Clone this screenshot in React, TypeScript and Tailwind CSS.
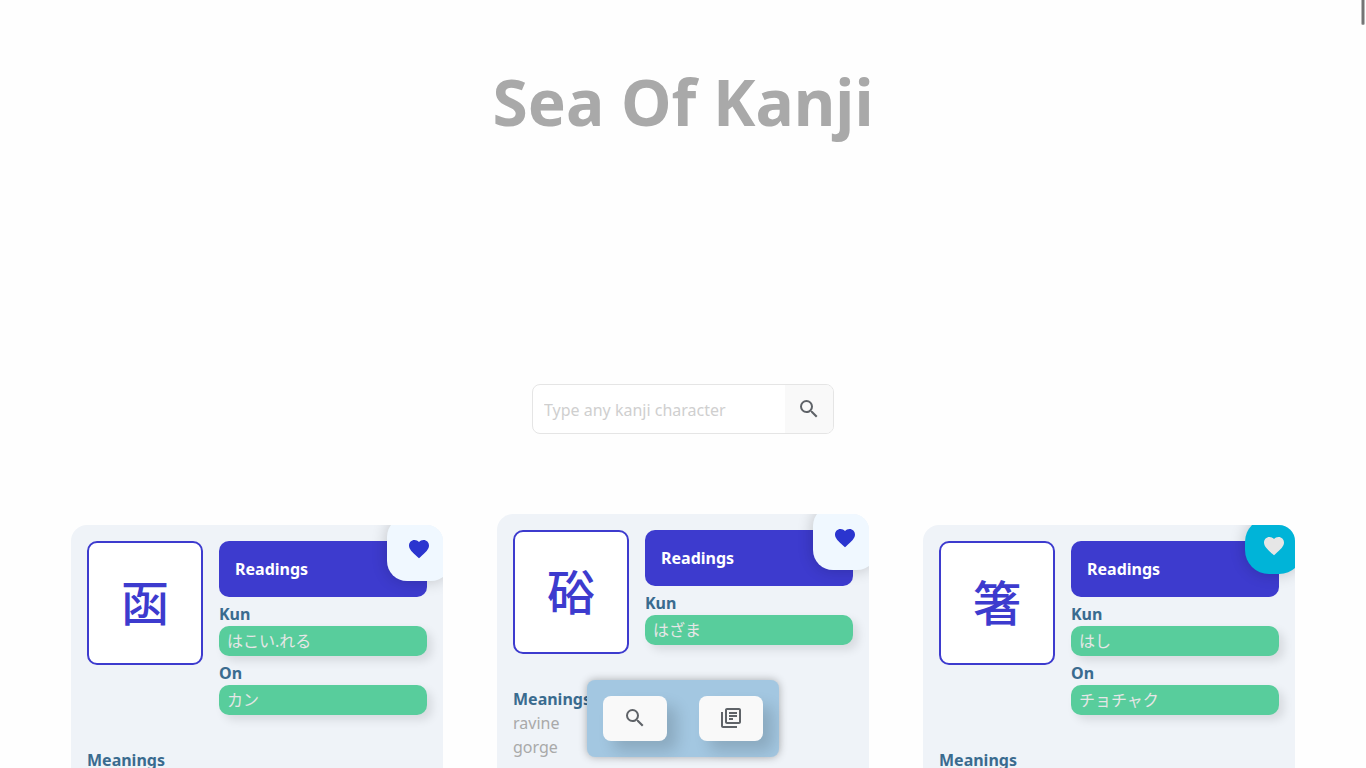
import { MdFavorite, MdOutlineLibraryBooks, MdSearch } from "react-icons/md";

type Kanji = {
  character: string;
  kun: string;
  on?: string;
  meanings: string[];
  liked: boolean;
  cardHeight: string;
};

const kanjiList: Kanji[] = [
  { character: "函", kun: "はこい.れる", on: "カン", meanings: [], liked: false, cardHeight: "min-h-[400px]" },
  { character: "硲", kun: "はざま", meanings: ["ravine", "gorge"], liked: false, cardHeight: "min-h-[422px]" },
  { character: "箸", kun: "はし", on: "チョチャク", meanings: [], liked: true, cardHeight: "min-h-[400px]" },
];

function Reading({ label, value }: { label: string; value: string }) {
  return (
    <div className="mt-[5px]">
      <h3 className="font-bold text-[#3a6b8f]">{label}</h3>
      <p className="h-[30px] rounded-[10px] bg-[#58cd9c] px-2 leading-[30px] text-[#e6e6e6] shadow-[5px_5px_10px_rgba(0,0,0,0.1)]">
        {value}
      </p>
    </div>
  );
}

function FavoriteButton({ character, liked }: { character: string; liked: boolean }) {
  const look = liked
    ? "-top-[7px] h-14 w-[58px] rounded-[24px] bg-[#00b4d8] text-[#e6e6e6]"
    : "-top-2 h-16 w-16 rounded-[20px] bg-[#f0f8ff] text-[#2b35cf]";
  return (
    <button
      type="button"
      aria-label={`Favorite ${character}`}
      aria-pressed={liked}
      className={`absolute -right-2 flex items-center justify-center shadow-[0_0_16px_rgba(0,0,0,0.2)] ${look}`}
    >
      <MdFavorite size={24} />
    </button>
  );
}

function KanjiCard({ kanji }: { kanji: Kanji }) {
  return (
    <article className={`relative overflow-hidden rounded-[16px] bg-[#eff3f8] p-4 ${kanji.cardHeight}`}>
      <div className="flex items-start gap-4">
        <div className="flex h-[124px] w-[116px] shrink-0 items-center justify-center rounded-[10px] border-2 border-[#3d3bce] bg-white text-5xl font-medium text-[#3d3bce]">
          {kanji.character}
        </div>
        <div className="min-w-0 flex-1">
          <h2 className="flex h-14 items-center rounded-[10px] bg-[#3d3bce] px-4 font-bold text-white">Readings</h2>
          <Reading label="Kun" value={kanji.kun} />
          {kanji.on && <Reading label="On" value={kanji.on} />}
        </div>
      </div>
      <h3 className="mt-[33px] font-bold text-[#3a6b8f]">Meanings</h3>
      <ul className="text-[#a9a9a9]">
        {kanji.meanings.map((meaning) => (
          <li key={meaning}>{meaning}</li>
        ))}
      </ul>
      <FavoriteButton character={kanji.character} liked={kanji.liked} />
    </article>
  );
}

export default function App() {
  return (
    <div className="h-screen overflow-hidden bg-[#fefefe] font-['Noto_Sans','Noto_Sans_CJK_JP',sans-serif] text-base">
      <header className="flex h-[204px] items-center justify-center">
        <h1 className="text-[64px] leading-[88px] font-bold text-[#a9a9a9]">Sea Of Kanji</h1>
      </header>

      <main>
        <form className="mx-auto mt-[180px] flex h-[50px] w-[302px] overflow-hidden rounded-[8px] border border-[#e5e5e5] bg-white">
          <input
            type="text"
            aria-label="Kanji character"
            placeholder="Type any kanji character"
            className="min-w-0 flex-1 px-[11px] pt-0.5 outline-none placeholder:text-[#cfcfcf]"
          />
          <button
            type="button"
            aria-label="Search"
            className="flex w-12 items-center justify-center bg-[#f9f9f9] text-[#5f6368]"
          >
            <MdSearch size={24} />
          </button>
        </form>

        <section className="mt-20 grid grid-cols-3 items-center gap-[54px] px-[71px]">
          {kanjiList.map((kanji) => (
            <KanjiCard key={kanji.character} kanji={kanji} />
          ))}
        </section>
      </main>

      <nav className="fixed bottom-[11px] left-1/2 flex -translate-x-1/2 gap-8 rounded-[8px] bg-[#a3c7e1] p-4 text-[#5f6368] shadow-[0_0_8px_rgba(0,0,0,0.3)]">
        <button
          type="button"
          aria-label="Search kanji"
          className="flex h-[45px] w-16 justify-center rounded-[8px] bg-[#f9f9f9] pt-2.5 shadow-[10px_10px_15px_rgba(0,0,0,0.15)]"
        >
          <MdSearch size={24} />
        </button>
        <button
          type="button"
          aria-label="Collection"
          className="flex h-[45px] w-16 justify-center rounded-[8px] bg-[#f9f9f9] pt-2.5 shadow-[10px_10px_15px_rgba(0,0,0,0.15)]"
        >
          <MdOutlineLibraryBooks size={24} />
        </button>
      </nav>

      <div className="fixed top-0 right-px h-[25px] w-1 rounded-b-[2px] border-x border-[#b8b8b8] bg-[#747474]" />
    </div>
  );
}
